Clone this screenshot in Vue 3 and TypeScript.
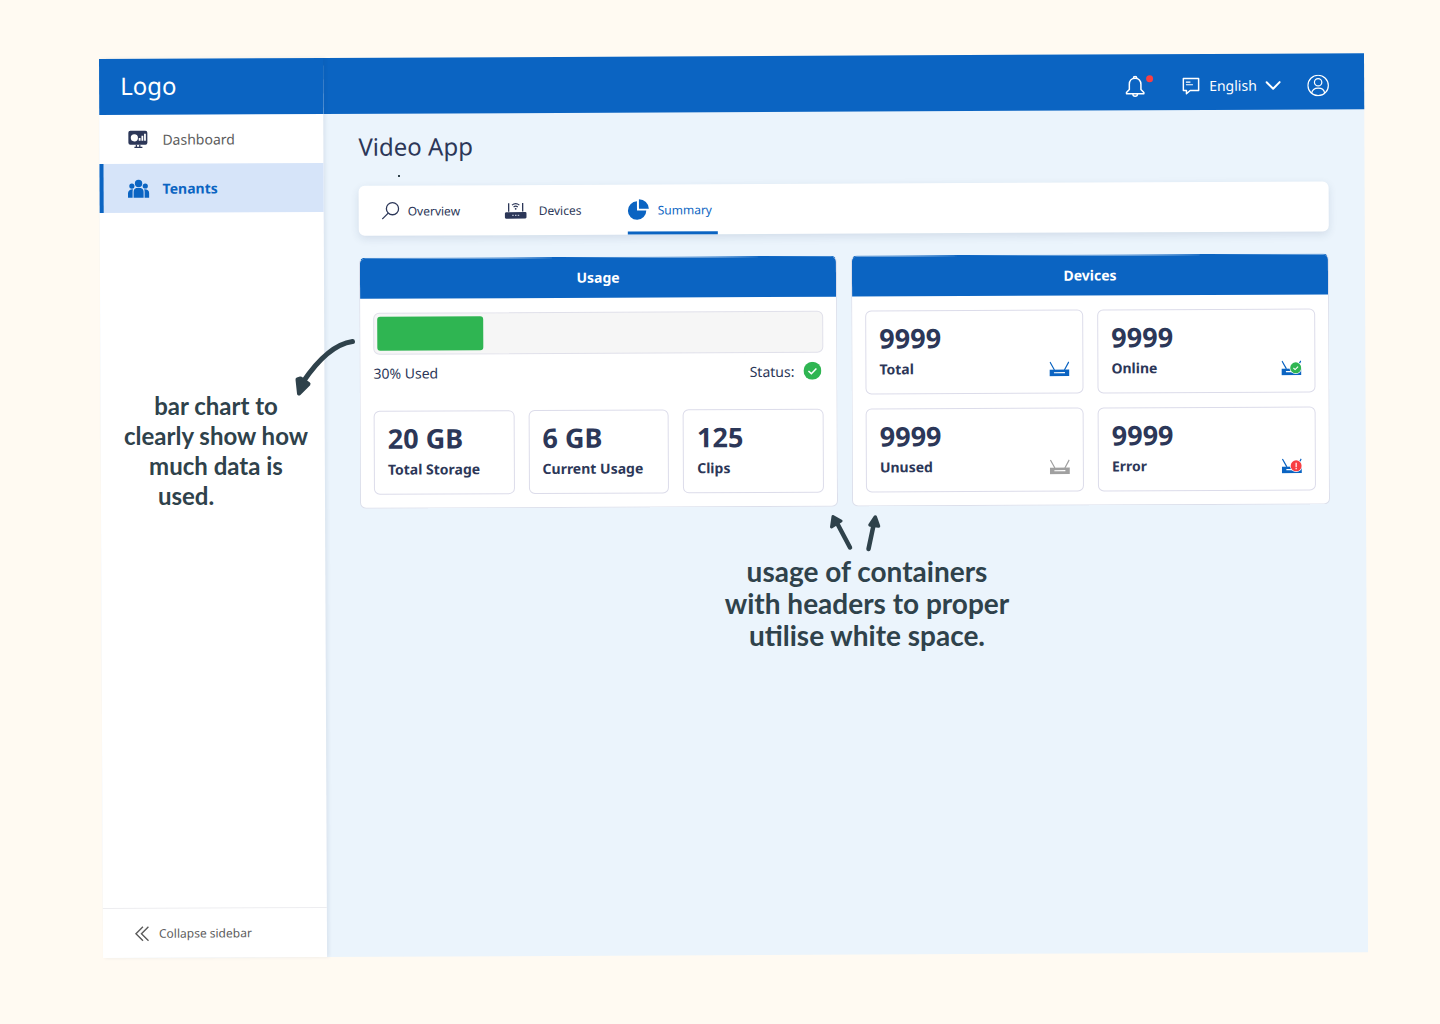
<script setup lang="ts">
interface Stat {
  value: string
  label: string
}

interface DeviceStat extends Stat {
  tone: 'blue' | 'grey'
  badge?: 'ok' | 'error'
}

const usage: { label: string; fill: number } = { label: '30% Used', fill: 24 }

const storageStats: Stat[] = [
  { value: '20 GB', label: 'Total Storage' },
  { value: '6 GB', label: 'Current Usage' },
  { value: '125', label: 'Clips' },
]

const deviceStats: DeviceStat[] = [
  { value: '9999', label: 'Total', tone: 'blue' },
  { value: '9999', label: 'Online', tone: 'blue', badge: 'ok' },
  { value: '9999', label: 'Unused', tone: 'grey' },
  { value: '9999', label: 'Error', tone: 'blue', badge: 'error' },
]
</script>

<template>
  <div class="page">
    <div class="frame">
      <aside class="sidebar">
        <div class="logo">Logo</div>
        <nav class="menu">
          <a href="#" class="item">
            <svg class="item-icon" width="22" height="20" viewBox="0 0 22 20">
              <rect x="1" y="1" width="19" height="14" rx="2" fill="#2c3758" />
              <circle cx="7" cy="8" r="3.6" fill="#fff" />
              <path d="M12.3 11V8.2M15 11V6M17.6 11V4" stroke="#fff" stroke-width="1.8" />
              <path d="M9 15v2.5M12.4 15v2.5M7 17.5h8" stroke="#2c3758" stroke-width="1.3" />
            </svg>
            <span>Dashboard</span>
          </a>
          <a href="#" class="item active" aria-current="page">
            <svg class="item-icon" width="22" height="20" viewBox="0 0 22 20" fill="#0b64c2">
              <circle cx="11" cy="4.6" r="3.7" />
              <circle cx="4.3" cy="7.2" r="2.6" />
              <circle cx="17.7" cy="7.2" r="2.6" />
              <path d="M6 19v-6q0-4 5-4t5 4v6z" />
              <path d="M.4 19v-4.500Q.4 10.600 5.400 10.400Q5 11.500 5 13v6z" />
              <path d="M21.600 19v-4.500Q21.600 10.600 16.600 10.400Q17 11.500 17 13v6z" />
            </svg>
            <span>Tenants</span>
          </a>
        </nav>
        <button type="button" class="collapse">
          <svg width="14" height="16" viewBox="0 0 14 16" fill="none" stroke="#5c5c5c" stroke-width="1.4">
            <path d="M8 1L1 8l7 7M13.500 1l-7 7 7 7" />
          </svg>
          <span>Collapse sidebar</span>
        </button>
      </aside>

      <div class="content">
        <header class="topbar">
          <button type="button" class="bell" aria-label="Notifications">
            <svg width="20" height="22" viewBox="0 0 20 22" fill="none" stroke="#fff" stroke-width="1.5">
              <path d="M10 3C6.300 3 4.200 5.600 4.200 9v5.200L1.300 17.200v1.300h17.400v-1.300l-2.900-3V9C15.800 5.600 13.700 3 10 3z" stroke-linejoin="round" />
              <path d="M8.300 3a1.700 1.700 0 0 1 3.400 0M7.700 18.700a2.300 2.300 0 0 0 4.600 0" />
            </svg>
            <i class="dot"></i>
          </button>
          <label class="language">
            <svg width="18" height="18" viewBox="0 0 18 18" fill="none" stroke="#fff" stroke-width="1.5">
              <path d="M1.200 1.500h15.300v12H8L4.300 16.700V13.500H1.200z" stroke-linejoin="round" />
              <path d="M3.800 5h4.500M3.800 7.700h7" stroke-width="1.2" />
            </svg>
            <span class="select-wrap">
              <select aria-label="Language">
                <option>English</option>
              </select>
              <svg class="chevron" width="16" height="10" viewBox="0 0 16 10" fill="none" stroke="#fff" stroke-width="2">
                <path d="M1.500 1.500L8 8l6.500-6.500" stroke-linecap="round" stroke-linejoin="round" />
              </svg>
            </span>
          </label>
          <button type="button" class="user" aria-label="Account">
            <svg width="22" height="22" viewBox="0 0 22 22" fill="none" stroke="#fff" stroke-width="1.200">
              <circle cx="11" cy="11" r="10.200" />
              <circle cx="11" cy="7.800" r="3.700" />
              <path d="M4.500 18.700C5 15.500 7.500 13.700 11 13.700s6 1.800 6.500 5" />
            </svg>
          </button>
        </header>

        <main class="main">
          <h1>Video App</h1>

          <nav class="tabs">
            <a href="#" class="tab">
              <svg width="18" height="18" viewBox="0 0 18 18" fill="none" stroke="#2c3758" stroke-width="1.300">
                <circle cx="10.800" cy="7" r="6.100" />
                <path d="M6.500 11.400L.5 17.400" />
              </svg>
              <span>Overview</span>
            </a>
            <a href="#" class="tab wide">
              <svg width="22" height="18" viewBox="0 0 22 18">
                <rect x="0" y="11" width="22" height="6.500" rx="1.500" fill="#2c3758" />
                <path d="M4 2v8.500M18 2v8.500" stroke="#2c3758" stroke-width="1.300" />
                <path d="M7.300 4q3.700-3 7.400 0M8.900 5.900q2.100-1.600 4.200 0" fill="none" stroke="#2c3758" stroke-width="1.200" />
                <circle cx="11" cy="7.700" r=".9" fill="#2c3758" />
                <path d="M7.500 14.300h1.500M10.300 14.300h1.500M13 14.300h1.500" stroke="#b9bfd0" stroke-width="1.200" />
              </svg>
              <span>Devices</span>
            </a>
            <a href="#" class="tab current" aria-current="true">
              <svg width="22" height="22" viewBox="0 0 22 22" fill="#0b64c2">
                <path d="M9.300 2.800A9.200 9.200 0 1 0 18.600 12H9.300z" />
                <path d="M11.300.600A9.900 9.900 0 0 1 21.200 10.300H11.300z" />
              </svg>
              <span>Summary</span>
            </a>
          </nav>

          <div class="cards">
            <section class="card">
              <h2>Usage</h2>
              <div class="card-body">
                <div class="bar" role="progressbar" aria-label="Storage used" aria-valuenow="30">
                  <div class="fill" :style="{ width: usage.fill + '%' }"></div>
                </div>
                <div class="bar-info">
                  <span>{{ usage.label }}</span>
                  <span class="status">
                    Status:
                    <svg width="18" height="18" viewBox="0 0 18 18">
                      <circle cx="9" cy="9" r="9" fill="#2fb552" />
                      <path d="M5 9.200l2.900 2.700L13 6.700" fill="none" stroke="#fff" stroke-width="1.500" />
                    </svg>
                  </span>
                </div>
                <div class="stats three">
                  <div v-for="s in storageStats" :key="s.label" class="stat">
                    <div class="value">{{ s.value }}</div>
                    <div class="label">{{ s.label }}</div>
                  </div>
                </div>
              </div>
            </section>

            <section class="card">
              <h2>Devices</h2>
              <div class="card-body">
                <div class="stats two">
                  <div v-for="d in deviceStats" :key="d.label" class="stat">
                    <div class="value">{{ d.value }}</div>
                    <div class="label">
                      <span>{{ d.label }}</span>
                      <svg class="router" :class="d.tone" width="20" height="16" viewBox="0 0 20 16">
                        <rect x="0" y="9" width="20" height="6.500" fill="currentColor" />
                        <path d="M.6 1.300L5 9.300M19.400 1.300L15 9.300" stroke="currentColor" stroke-width="1.200" />
                        <path d="M4.500 12.100h11" stroke="#fff" stroke-width="1.200" />
                        <template v-if="d.badge">
                          <circle cx="14.300" cy="8.300" r="6.200" fill="#fff" />
                          <circle cx="14.300" cy="8.300" r="5.500" :fill="d.badge === 'ok' ? '#2fb552' : '#f83f43'" />
                          <path v-if="d.badge === 'ok'" d="M12 8.400l1.700 1.600 3-3" fill="none" stroke="#fff" stroke-width="1.100" />
                          <path v-else d="M14.300 5.200v4.200M14.300 10.300v1.300" stroke="#fff" stroke-width="1.200" />
                        </template>
                      </svg>
                    </div>
                  </div>
                </div>
              </div>
            </section>
          </div>
        </main>
      </div>
    </div>

    <!-- Hand-made review notes lying over the screen -->
    <p class="note note-chart">
      <span>bar chart to</span>
      <span>clearly show how</span>
      <span>much data is</span>
      <span class="short">used.</span>
    </p>
    <svg class="mark arrow-chart" width="68" height="60" viewBox="0 0 68 60">
      <path d="M62.500 3.500Q38 7 13 44" fill="none" stroke="#2f424b" stroke-width="5" stroke-linecap="round" />
      <path d="M7.500 41.500l3-1 8 5.500-9.500 9.500z" fill="#2f424b" stroke="#2f424b" stroke-width="4" stroke-linejoin="round" />
    </svg>
    <p class="note note-cards">
      <span>usage of containers</span>
      <span>with headers to proper</span>
      <span>utilise white space.</span>
    </p>
    <svg class="mark arrow-cards" width="52" height="38" viewBox="0 0 52 38">
      <g fill="#2f424b" stroke="#2f424b" stroke-linecap="round" stroke-linejoin="round">
        <path d="M20 33.500L7 9" stroke-width="4.500" />
        <path d="M3 2.500l8 4.500-9.500 6z" stroke-width="3" />
        <path d="M38.500 35L44 9" stroke-width="4.500" />
        <path d="M45.300 3l3.200 9-8.500-1z" stroke-width="3.500" />
      </g>
    </svg>
    <i class="mark speck"></i>
  </div>
</template>

<style>
body {
  margin: 0;
  background: #fffaf2;
}
</style>

<style scoped>
* {
  box-sizing: border-box;
}

.page {
  position: relative;
  min-height: 100vh;
  padding: 59px 76px 66px 99px;
  overflow: hidden;
  background: #fffaf2;
  color: #2c3758;
  font-family: 'Noto Sans', sans-serif;
  font-size: 14px;
}

.frame {
  display: flex;
  min-height: calc(100vh - 125px);
  background: #ebf4fc;
  transform: rotate(-0.26deg);
  transform-origin: 0 0;
}

button {
  padding: 0;
  border: 0;
  background: none;
  font: inherit;
  color: inherit;
}

a {
  color: inherit;
  text-decoration: none;
}

svg {
  display: block;
  flex: none;
}

.sidebar {
  position: relative;
  z-index: 1;
  display: flex;
  flex: none;
  flex-direction: column;
  width: 224px;
  background: #fff;
  box-shadow: 2px 0 4px rgba(20, 50, 90, 0.08);
}

.logo {
  height: 56px;
  padding-left: 21px;
  background: #0b64c2;
  color: #fff;
  font-size: 24px;
  line-height: 54px;
}

.menu {
  flex: 1;
}

.item {
  display: flex;
  align-items: center;
  gap: 13px;
  height: 49px;
  padding-left: 24px;
  border-left: 4px solid transparent;
  color: #5c5c5c;
}

.item.active {
  border-color: #0b64c2;
  background: #d6e4f9;
  color: #0b64c2;
  font-weight: 700;
}

.collapse {
  display: flex;
  align-items: center;
  gap: 10px;
  height: 50px;
  padding-left: 32px;
  border-top: 1px solid #ededf0;
  color: #5c5c5c;
  font-size: 12px;
}

.content {
  flex: 1;
  min-width: 0;
}

.topbar {
  display: flex;
  align-items: center;
  justify-content: flex-end;
  height: 56px;
  padding: 8px 35px 0 0;
  background: #0b64c2;
  color: #fff;
}

.bell {
  position: relative;
  margin-right: 37px;
}

.dot {
  position: absolute;
  top: 0;
  right: -8px;
  width: 7px;
  height: 7px;
  border-radius: 50%;
  background: #f83f43;
}

.language {
  display: flex;
  align-items: center;
  gap: 9px;
  margin-right: 26px;
}

.select-wrap {
  position: relative;
}

select {
  appearance: none;
  display: block;
  margin: 0;
  padding: 0 24px 0 0;
  border: 0;
  background: none;
  color: #fff;
  font: inherit;
  line-height: 20px;
}

.chevron {
  position: absolute;
  top: 5px;
  right: 0;
  pointer-events: none;
}

.main {
  padding: 15px 36px 15px 35px;
}

h1 {
  margin: 0 0 21px;
  font-size: 24px;
  font-weight: 400;
  line-height: 36px;
}

.tabs {
  display: flex;
  gap: 39px;
  height: 50px;
  margin-bottom: 22px;
  padding-left: 23px;
  border-radius: 6px;
  background: #fff;
  box-shadow: 0 3px 8px rgba(30, 60, 100, 0.12);
  font-size: 12px;
}

.tab {
  display: flex;
  align-items: center;
  gap: 8px;
  min-width: 84px;
  padding-right: 4px;
  border-top: 3px solid transparent;
  border-bottom: 3px solid transparent;
}

.tab.wide {
  gap: 12px;
}

.tab.current {
  min-width: 90px;
  border-bottom-color: #0b64c2;
  color: #0b64c2;
}

.cards {
  display: grid;
  grid-template-columns: 1fr 1fr;
  gap: 14px;
}

.card {
  overflow: hidden;
  border: 1px solid #dcdfeb;
  border-top-color: #0b64c2;
  border-radius: 6px;
  background: #fff;
}

h2 {
  margin: 0;
  background: #0b64c2;
  color: #fff;
  font-size: 14px;
  font-weight: 700;
  line-height: 40px;
  text-align: center;
}

.card-body {
  padding: 14px 13px 13px;
}

.bar {
  height: 42px;
  padding: 3px;
  border: 1px solid #e0e0ea;
  border-radius: 6px;
  background: #f6f6f6;
}

.fill {
  height: 100%;
  border-radius: 3px;
  background: #2fb552;
}

.bar-info {
  display: flex;
  align-items: center;
  justify-content: space-between;
  height: 36px;
  margin-bottom: 20px;
}

.status {
  display: flex;
  align-items: center;
  gap: 9px;
  padding-right: 2px;
}

.stats {
  display: grid;
  gap: 14px;
}

.three {
  grid-template-columns: repeat(3, 1fr);
}

.two {
  grid-template-columns: repeat(2, 1fr);
}

.stat {
  height: 84px;
  padding: 7px 13px;
  border: 1px solid #dcdcea;
  border-radius: 6px;
  font-weight: 700;
}

.value {
  font-size: 27px;
  line-height: 40px;
}

.label {
  display: flex;
  align-items: center;
  justify-content: space-between;
  line-height: 22px;
  white-space: nowrap;
}

.router.blue {
  color: #0b64c2;
}

.router.grey {
  color: #a0a0a0;
}

.note {
  position: absolute;
  z-index: 2;
  margin: 0;
  color: #2f424b;
  font-family: Lato, sans-serif;
  font-size: 24px;
  font-weight: 700;
  text-align: center;
  white-space: nowrap;
}

.note span {
  display: block;
}

.note-chart {
  top: 391px;
  left: 116px;
  width: 200px;
  line-height: 30px;
}

.note-chart .short {
  padding-right: 60px;
}

.note-cards {
  top: 555px;
  left: 717px;
  width: 300px;
  font-size: 28px;
  line-height: 32px;
}

.mark {
  position: absolute;
  z-index: 2;
}

.arrow-chart {
  top: 338px;
  left: 290px;
}

.arrow-cards {
  top: 514px;
  left: 830px;
}

.speck {
  top: 175px;
  left: 398px;
  width: 2px;
  height: 2px;
  background: #2f424b;
}
</style>
